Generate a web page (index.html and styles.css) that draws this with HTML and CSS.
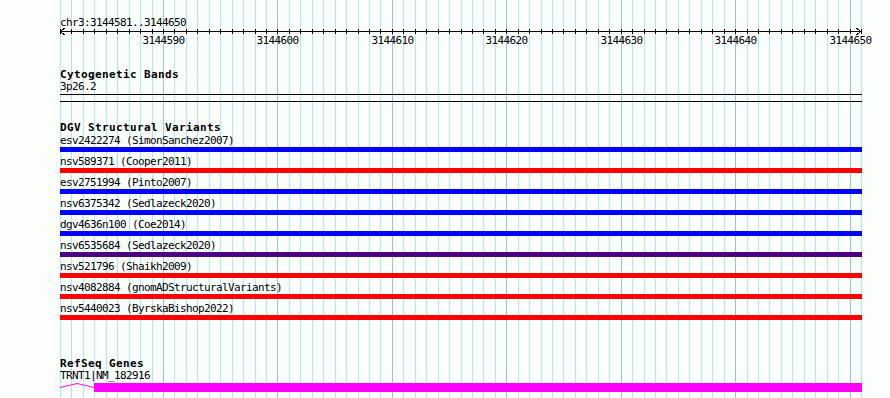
FILE: index.html
```html
<!DOCTYPE html>
<html lang="en">
<head>
  <meta charset="UTF-8" />
  <meta name="viewport" content="width=device-width, initial-scale=1.0"/>
  <title>chr3:3144581..3144650</title>
  <link rel="stylesheet" href="styles.css">
</head>
<body>
  <div class="panel">
    <div class="canvas">
      <!-- ruler: one tick per base -->
      <svg class="ruler" width="802" height="50" viewBox="0 0 802 50">
        <text x="0" y="26">chr3:3144581..3144650</text>
        <path class="axis" d="M0 31.5H801M4.5 28L0.5 31.5L4.5 35M796.5 28L800.5 31.5L796.5 35" />
        <path class="ticks" d="M0.5 29v5M11.5 29v5M23.5 29v5M34.5 29v5M46.5 29v5M57.5 29v5M69.5 29v5M80.5 29v5M92.5 29v5M103.5 29v5M114.5 29v5M126.5 29v5M137.5 29v5M149.5 29v5M160.5 29v5M172.5 29v5M183.5 29v5M195.5 29v5M206.5 29v5M217.5 29v5M229.5 29v5M240.5 29v5M252.5 29v5M263.5 29v5M275.5 29v5M286.5 29v5M298.5 29v5M309.5 29v5M320.5 29v5M332.5 29v5M343.5 29v5M355.5 29v5M366.5 29v5M378.5 29v5M389.5 29v5M401.5 29v5M412.5 29v5M423.5 29v5M435.5 29v5M446.5 29v5M458.5 29v5M469.5 29v5M481.5 29v5M492.5 29v5M503.5 29v5M515.5 29v5M526.5 29v5M538.5 29v5M549.5 29v5M561.5 29v5M572.5 29v5M584.5 29v5M595.5 29v5M606.5 29v5M618.5 29v5M629.5 29v5M641.5 29v5M652.5 29v5M664.5 29v5M675.5 29v5M687.5 29v5M698.5 29v5M709.5 29v5M721.5 29v5M732.5 29v5M744.5 29v5M755.5 29v5M767.5 29v5M778.5 29v5M790.5 29v5M801.5 29v5" />
        <text class="tick-label" x="103.5" y="44">3144590</text>
        <text class="tick-label" x="217.5" y="44">3144600</text>
        <text class="tick-label" x="332.5" y="44">3144610</text>
        <text class="tick-label" x="446.5" y="44">3144620</text>
        <text class="tick-label" x="561.5" y="44">3144630</text>
        <text class="tick-label" x="675.5" y="44">3144640</text>
        <text class="tick-label" x="790.5" y="44">3144650</text>
      </svg>

      <section class="track cyto">
        <h2 class="track-title">Cytogenetic Bands</h2>
        <div class="label">3p26.2</div>
        <div class="rule"></div>
        <div class="rule"></div>
      </section>

      <section class="track dgv">
        <h2 class="track-title">DGV Structural Variants</h2>
        <div class="features">
          <div class="label">esv2422274 (SimonSanchez2007)</div>
          <div class="bar blue"></div>
          <div class="label">nsv589371 (Cooper2011)</div>
          <div class="bar red"></div>
          <div class="label">esv2751994 (Pinto2007)</div>
          <div class="bar blue"></div>
          <div class="label">nsv6375342 (Sedlazeck2020)</div>
          <div class="bar blue"></div>
          <div class="label">dgv4636n100 (Coe2014)</div>
          <div class="bar blue"></div>
          <div class="label">nsv6535684 (Sedlazeck2020)</div>
          <div class="bar purple"></div>
          <div class="label">nsv521796 (Shaikh2009)</div>
          <div class="bar red"></div>
          <div class="label">nsv4082884 (gnomADStructuralVariants)</div>
          <div class="bar red"></div>
          <div class="label">nsv5440023 (ByrskaBishop2022)</div>
          <div class="bar red"></div>
        </div>
      </section>

      <section class="track refseq">
        <h2 class="track-title">RefSeq Genes</h2>
        <div class="label">TRNT1|NM_182916</div>
        <div class="gene">
          <svg class="intron" width="34" height="9" viewBox="0 0 34 9">
            <polyline points="0,4.5 17,0.5 34,4.5" />
          </svg>
          <div class="exon"></div>
        </div>
      </section>
    </div>
  </div>
</body>
</html>
```

FILE: styles.css
```css
body {
  margin: 0;
  background-color: #fcfefc;
  overflow: hidden;
}
.panel {
  width: 890px;
  height: 398px;
  padding-left: 60px;
  box-sizing: border-box;
}
.canvas {
  width: 802px;
  height: 398px;
  background-image:
    repeating-linear-gradient(90deg, transparent 0 103px, #8cc8ec 103px 104px, transparent 104px 114.43px),
    repeating-linear-gradient(90deg, #a8ecf0 0 1px, transparent 1px 11.443px);
  font-family: "DejaVu Sans Mono", monospace;
  font-size: 11px;
  letter-spacing: -0.62px;
  line-height: 12px;
  color: #000;
}
.ruler {
  display: block;
  overflow: visible;
}
.ruler text {
  font-family: "DejaVu Sans Mono", monospace;
  font-size: 11px;
  letter-spacing: -0.62px;
  fill: #000;
}
.ruler .tick-label {
  text-anchor: middle;
}
.ruler path {
  fill: none;
  stroke: #000;
  stroke-width: 1;
  shape-rendering: crispEdges;
}
.track-title {
  margin: 0;
  font-size: 11px;
  font-weight: bold;
  letter-spacing: 0.38px;
  line-height: 12px;
}
.label {
  height: 12px;
  white-space: nowrap;
}
.cyto {
  margin-top: 19px;
}
.rule {
  height: 1px;
  margin-top: 1px;
  background-color: #000;
}
.rule + .rule {
  margin-top: 6px;
}
.dgv {
  margin-top: 20px;
}
.features {
  margin-top: 1px;
}
.bar {
  height: 5px;
  margin-bottom: 4px;
}
.blue { background-color: #0000ff; }
.red { background-color: #ff0000; }
.purple { background-color: #4b0082; }
.refseq {
  padding-top: 34px;
}
.gene {
  display: flex;
  height: 9px;
  margin-top: 1px;
}
.intron {
  display: block;
  flex: none;
}
.intron polyline {
  fill: none;
  stroke: #ff00ff;
  stroke-width: 1;
}
.exon {
  flex: 1;
  background-color: #ff00ff;
}
```
